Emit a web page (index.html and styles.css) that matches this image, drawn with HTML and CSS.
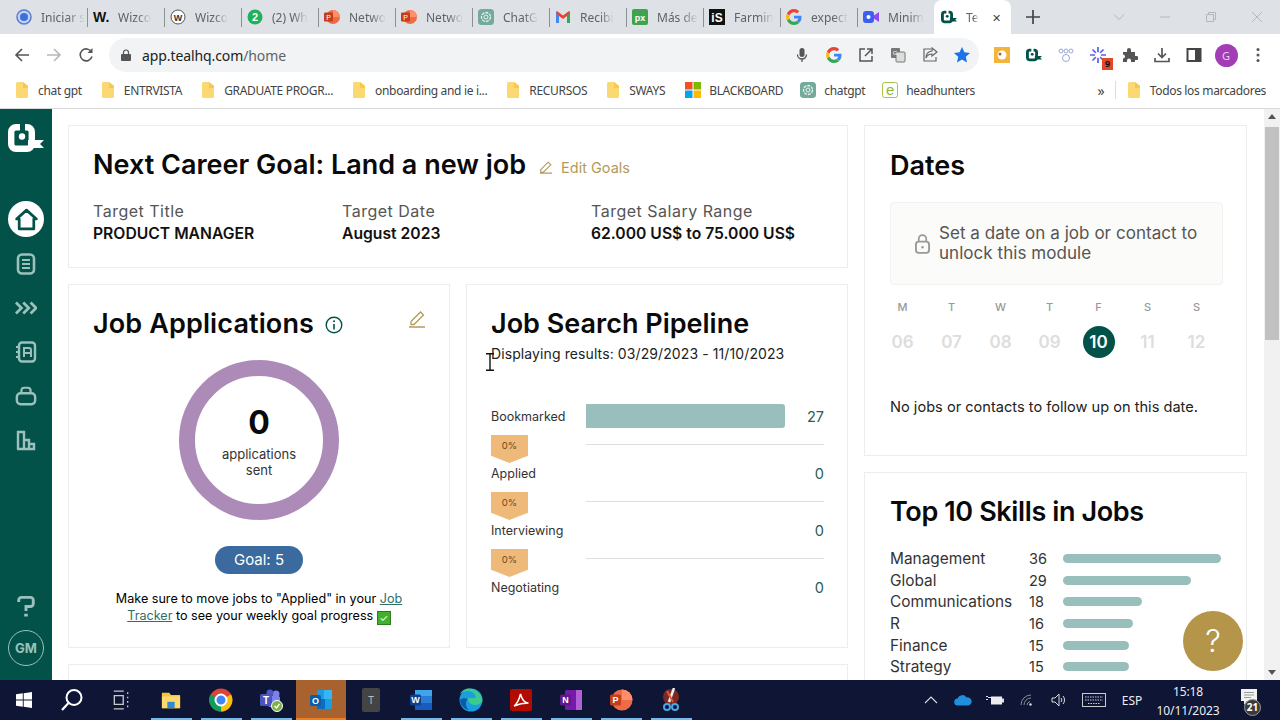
FILE: index.html
```html
<!DOCTYPE html>
<html lang="es">
<head>
<meta charset="utf-8">
<title>Teal</title>
<link rel="stylesheet" href="styles.css">
</head>
<body>
<svg class="defs" width="0" height="0">
  <symbol id="folder" viewBox="0 0 12 16"><path d="M0 1.500A1.500 1.500 0 0 1 1.500 0H7l5 4v10.500A1.500 1.500 0 0 1 10.500 16H1.500A1.500 1.500 0 0 1 0 14.500Z" fill="#fbd872"/><path d="M7 0l5 4v2H7Z" fill="#f5c84f"/></symbol>
  <symbol id="gpt" viewBox="0 0 16 16"><rect width="16" height="16" rx="3.500" fill="#74aa9c"/><circle cx="8" cy="8" r="4.500" fill="none" stroke="#e8f3f0" stroke-width="1.300" stroke-dasharray="3 1"/><circle cx="8" cy="8" r="2" fill="none" stroke="#e8f3f0"/></symbol>
  <symbol id="google" viewBox="0 0 16 16"><path d="M15.500 8.200c0-.6 0-1-.1-1.500H8v2.900h4.300c-.2 1-.8 1.800-1.600 2.300l2.500 1.900c1.500-1.300 2.300-3.300 2.300-5.600Z" fill="#4285f4"/><path d="M8 16c2.200 0 4-.7 5.200-2l-2.500-1.900c-.7.5-1.600.7-2.700.7-2.100 0-3.900-1.400-4.500-3.300L.9 11.400C2.200 14.100 4.900 16 8 16Z" fill="#34a853"/><path d="M3.500 9.500a5 5 0 0 1 0-3L.9 4.500a8 8 0 0 0 0 7Z" fill="#fbbc05"/><path d="M8 3.200c1.200 0 2.200.4 3 1.200l2.200-2.200A7.600 7.600 0 0 0 8 0C4.900 0 2.200 1.900.9 4.500l2.600 2C4.100 4.600 5.900 3.200 8 3.200Z" fill="#ea4335"/></symbol>
  <symbol id="tealmark" viewBox="0 0 36 28"><path d="M12 3.200H8a4.800 4.800 0 0 0-4.800 4.800v12A4.800 4.800 0 0 0 8 24.800h11a4.800 4.800 0 0 0 4.800-4.800V8A4.800 4.800 0 0 0 19 3.200h-2" fill="none" stroke="currentColor" stroke-width="6.400"/><circle cx="14" cy="12.500" r="3.200" fill="currentColor"/><path d="M20 16h16l-4 4 4 4H20Z" fill="currentColor"/></symbol>
</svg>

<div class="chrome">
  <div class="tabstrip">
    <div class="tab"><svg class="fav" viewBox="0 0 16 16"><circle cx="8" cy="8" r="7" fill="#c5d3f3" stroke="#5a7dd0" stroke-width="1.500"/><circle cx="8" cy="8" r="4" fill="#3f6fd8"/></svg><span class="tabtext">Iniciar s</span></div>
    <div class="tab"><svg class="fav" viewBox="0 0 16 16"><text x="0" y="13" class="svgt" font-size="14" font-weight="900" fill="#111">W.</text></svg><span class="tabtext">Wizco</span></div>
    <div class="tab"><svg class="fav" viewBox="0 0 16 16"><circle cx="8" cy="8" r="7" fill="#fff" stroke="#555"/><text x="8" y="11.500" class="svgt" font-size="9" font-weight="700" fill="#333" text-anchor="middle">W</text></svg><span class="tabtext">Wizco</span></div>
    <div class="tab"><svg class="fav" viewBox="0 0 16 16"><circle cx="8" cy="8" r="7.500" fill="#20b15a"/><text x="8" y="12" class="svgt" font-size="11" font-weight="700" fill="#fff" text-anchor="middle">2</text></svg><span class="tabtext">(2) Wh</span></div>
    <div class="tab"><svg class="fav" viewBox="0 0 16 16"><circle cx="9" cy="8" r="7" fill="#ed6c47"/><path d="M9 1a7 7 0 0 1 7 7H9Z" fill="#ff8f6b"/><rect x="0" y="3.500" width="9" height="9" rx="1" fill="#c43e1c"/><text x="4.500" y="10.800" class="svgt" font-size="7" fill="#fff" text-anchor="middle">P</text></svg><span class="tabtext">Netwo</span></div>
    <div class="tab"><svg class="fav" viewBox="0 0 16 16"><circle cx="9" cy="8" r="7" fill="#ed6c47"/><path d="M9 1a7 7 0 0 1 7 7H9Z" fill="#ff8f6b"/><rect x="0" y="3.500" width="9" height="9" rx="1" fill="#c43e1c"/><text x="4.500" y="10.800" class="svgt" font-size="7" fill="#fff" text-anchor="middle">P</text></svg><span class="tabtext">Netwo</span></div>
    <div class="tab"><svg class="fav"><use href="#gpt"/></svg><span class="tabtext">ChatG</span></div>
    <div class="tab"><svg class="fav" viewBox="0 0 16 16"><path d="M1 3v11h3V7l4 3 4-3v7h3V3l-1-1-6 4.500L2 2Z" fill="#ea4335"/><path d="M1 3v11h3V7Z" fill="#4285f4"/><path d="M12 7v7h3V3Z" fill="#34a853"/></svg><span class="tabtext">Recibi</span></div>
    <div class="tab"><svg class="fav" viewBox="0 0 16 16"><rect width="16" height="16" rx="2" fill="#3fa34d"/><text x="8" y="11.500" class="svgt" font-size="9" font-weight="700" fill="#fff" text-anchor="middle">px</text></svg><span class="tabtext">Más de</span></div>
    <div class="tab"><svg class="fav" viewBox="0 0 16 16"><rect width="16" height="16" fill="#111"/><text x="8" y="12.500" class="svgt" font-size="12" font-weight="700" fill="#fff" text-anchor="middle">iS</text></svg><span class="tabtext">Farmin</span></div>
    <div class="tab"><svg class="fav"><use href="#google"/></svg><span class="tabtext">expect</span></div>
    <div class="tab"><svg class="fav" viewBox="0 0 16 16"><rect y="2" width="11" height="12" rx="3" fill="#3d5ff0"/><path d="M11 6.500 16 3v10l-5-3.500Z" fill="#8a4bf0"/><circle cx="5.500" cy="8" r="2" fill="#fff"/></svg><span class="tabtext">Minim</span></div>
    <div class="tab tab-active"><svg class="fav logo-small"><use href="#tealmark"/></svg><span class="tabtext">Te</span><span class="tabclose">✕</span></div>
    <svg class="newtab" viewBox="0 0 14 14"><path d="M7 0v14M0 7h14" stroke="#444" stroke-width="1.700"/></svg>
    <div class="winctl">
      <svg class="wc" viewBox="0 0 12 12"><path d="M1 3.500l5 5 5-5" fill="none" stroke="#b5b7ba"/></svg>
      <svg class="wc" viewBox="0 0 12 12"><path d="M1 6h10" stroke="#b5b7ba"/></svg>
      <svg class="wc" viewBox="0 0 12 12"><path d="M1.500 3.500h7v7h-7ZM3.500 3.500v-2h7v7h-2" fill="none" stroke="#b5b7ba"/></svg>
      <svg class="wc" viewBox="0 0 12 12"><path d="M1 1l10 10M11 1 1 11" stroke="#b5b7ba"/></svg>
    </div>
  </div>

  <div class="toolbar">
    <div class="tbtn"><svg class="ti" viewBox="0 0 16 16"><path d="M15 8H2M8 2 2 8l6 6" fill="none" stroke="#555" stroke-width="1.600"/></svg></div>
    <div class="tbtn"><svg class="ti" viewBox="0 0 16 16"><path d="M1 8h13M8 2l6 6-6 6" fill="none" stroke="#b8b8b8" stroke-width="1.600"/></svg></div>
    <div class="tbtn"><svg class="ti" viewBox="0 0 16 16"><path d="M13.500 5A6 6 0 1 0 14 9.500" fill="none" stroke="#555" stroke-width="1.600"/><path d="M14.500 1v5h-5Z" fill="#555"/></svg></div>
    <div class="omnibox">
      <svg class="lock" viewBox="0 0 10 12"><path d="M2.500 5V3.500a2.500 2.500 0 0 1 5 0V5" fill="none" stroke="#555" stroke-width="1.200"/><rect y="5" width="10" height="7" rx="1" fill="#555"/></svg>
      <span class="url"><span class="url-host">app.tealhq.com</span>/home</span>
      <div class="omni-icons">
        <div class="tbtn"><svg class="ti" viewBox="0 0 16 16"><rect x="5.500" y="1" width="5" height="9" rx="2.500" fill="#555"/><path d="M3.500 7.500a4.500 4.500 0 0 0 9 0M8 12v3" fill="none" stroke="#555" stroke-width="1.300"/></svg></div>
        <div class="tbtn"><svg class="ti"><use href="#google"/></svg></div>
        <div class="tbtn"><svg class="ti" viewBox="0 0 16 16"><path d="M7 2H2v12h12V9M9 2h5v5M14 2 7 9" fill="none" stroke="#555" stroke-width="1.500"/></svg></div>
        <div class="tbtn"><svg class="ti" viewBox="0 0 16 16"><rect x="1" y="1" width="9" height="10" rx="1" fill="#777"/><rect x="6" y="5" width="9" height="10" rx="1" fill="#ddd" stroke="#777"/><text x="5" y="8" class="svgt" font-size="6" fill="#fff" text-anchor="middle">G</text></svg></div>
        <div class="tbtn"><svg class="ti" viewBox="0 0 16 16"><path d="M9 2h-7v12h12v-4M10 1l5 4-5 4V7C7 7 5 8.500 4 11c0-4 2-6.500 6-7Z" fill="none" stroke="#666" stroke-width="1.200"/></svg></div>
        <div class="tbtn"><svg class="ti" viewBox="0 0 16 16"><path d="M8 0l2.400 5.300 5.600.6-4.200 3.800 1.200 5.700L8 12.500l-5 2.900 1.200-5.700L0 5.900l5.600-.6Z" fill="#1a73e8"/></svg></div>
      </div>
    </div>
    <div class="extensions">
      <div class="tbtn"><svg class="ti" viewBox="0 0 16 16"><rect width="16" height="16" fill="#f3b43c"/><circle cx="8" cy="8" r="4.500" fill="#fff"/><circle cx="6" cy="7" r="1.500" fill="#a86a2c"/></svg></div>
      <div class="tbtn"><svg class="ti logo-small"><use href="#tealmark"/></svg></div>
      <div class="tbtn"><svg class="ti" viewBox="0 0 16 16"><g fill="none" stroke="#9aa5dc"><circle cx="3" cy="4" r="2"/><circle cx="8" cy="4" r="2"/><circle cx="13" cy="4" r="2"/><circle cx="8" cy="11" r="3.500"/></g></svg></div>
      <div class="tbtn ext-badge"><svg class="ti" viewBox="0 0 16 16"><g stroke="#5b5fe8" stroke-width="1.700"><path d="M8 0v16M0 8h16M2.500 2.500l11 11M13.500 2.500l-11 11"/></g><circle cx="8" cy="8" r="3" fill="#fff"/></svg><span class="badge9">9</span></div>
      <div class="tbtn"><svg class="ti" viewBox="0 0 16 16"><path d="M1 5h4V3a2 2 0 0 1 4 0v2h4v4h1.500a2 2 0 0 1 0 4H13v2H9v-1.500a2 2 0 0 0-4 0V15H1v-3.500a2 2 0 0 0 0-4Z" fill="#555"/></svg></div>
      <div class="tbtn"><svg class="ti" viewBox="0 0 16 16"><path d="M8 1v9M4 6.500 8 10.500l4-4M1 11v3.500h14V11" fill="none" stroke="#555" stroke-width="1.700"/></svg></div>
      <div class="tbtn"><svg class="ti" viewBox="0 0 16 16"><rect x="1.500" y="2" width="13" height="12" fill="none" stroke="#444" stroke-width="2"/><rect x="9" y="2" width="5" height="12" fill="#444"/></svg></div>
      <div class="tbtn"><span class="avatar">G</span></div>
      <div class="tbtn"><svg class="ti" viewBox="0 0 16 16"><g fill="#555"><circle cx="8" cy="2.500" r="1.500"/><circle cx="8" cy="8" r="1.500"/><circle cx="8" cy="13.500" r="1.500"/></g></svg></div>
    </div>
  </div>

  <div class="bookmarks">
    <a class="bm"><svg class="bmi"><use href="#folder"/></svg>chat gpt</a>
    <a class="bm"><svg class="bmi"><use href="#folder"/></svg>ENTRVISTA</a>
    <a class="bm"><svg class="bmi"><use href="#folder"/></svg>GRADUATE PROGR...</a>
    <a class="bm"><svg class="bmi"><use href="#folder"/></svg>onboarding and ie i...</a>
    <a class="bm"><svg class="bmi"><use href="#folder"/></svg>RECURSOS</a>
    <a class="bm"><svg class="bmi"><use href="#folder"/></svg>SWAYS</a>
    <a class="bm bm-app"><svg class="bmi bmi-wide" viewBox="0 0 16 16"><rect width="7.500" height="7.500" fill="#f25022"/><rect x="8.500" width="7.500" height="7.500" fill="#7fba00"/><rect y="8.500" width="7.500" height="7.500" fill="#00a4ef"/><rect x="8.500" y="8.500" width="7.500" height="7.500" fill="#ffb900"/></svg>BLACKBOARD</a>
    <a class="bm bm-app bm-tight"><svg class="bmi bmi-wide"><use href="#gpt"/></svg>chatgpt</a>
    <a class="bm bm-app bm-tight"><svg class="bmi bmi-wide" viewBox="0 0 16 16"><rect x=".5" y=".5" width="15" height="15" rx="2" fill="#fff" stroke="#a5c24a"/><text x="8" y="13" class="svgt" font-size="15" fill="#93b53a" text-anchor="middle">e</text></svg>headhunters</a>
    <div class="bm-end">
      <span class="bm-more">»</span>
      <span class="bm-sep"></span>
      <a class="bm"><svg class="bmi"><use href="#folder"/></svg>Todos los marcadores</a>
    </div>
  </div>
</div>

<div class="app">
  <nav class="sidebar">
    <svg class="logo"><use href="#tealmark"/></svg>
    <div class="nav-home"><svg viewBox="0 0 24 24"><path d="M12 3 2.500 11.500H5V21h14v-9.500h2.500Z" fill="none" stroke="#03524a" stroke-width="2.600" stroke-linejoin="round"/></svg></div>
    <svg class="nav-i" viewBox="0 0 22 22"><rect x="3" y="1.500" width="16" height="19" rx="4" fill="none" stroke="currentColor" stroke-width="2.600"/><path d="M7 7h8M7 11h8M7 15h8" stroke="currentColor" stroke-width="2"/></svg>
    <svg class="nav-i" viewBox="0 0 24 22"><path d="M1 5l6 6-6 6M9 5l6 6-6 6M17 5l6 6-6 6" fill="none" stroke="currentColor" stroke-width="3"/></svg>
    <svg class="nav-i" viewBox="0 0 22 22"><rect x="4" y="1.500" width="16" height="19" rx="3" fill="none" stroke="currentColor" stroke-width="2.400"/><path d="M1 6h4M1 11h4M1 16h4" stroke="currentColor" stroke-width="2"/><path d="M9 16V7h5a2 2 0 0 1 2 2v7M9 12h7" fill="none" stroke="currentColor" stroke-width="2"/></svg>
    <svg class="nav-i" viewBox="0 0 24 22"><path d="M7 7V5a3 3 0 0 1 3-3h4a3 3 0 0 1 3 3v2" fill="none" stroke="currentColor" stroke-width="2.400"/><rect x="2" y="8" width="20" height="12" rx="4" fill="none" stroke="currentColor" stroke-width="2.600"/></svg>
    <svg class="nav-i" viewBox="0 0 22 22"><path d="M3 20V3h6v17M9 20v-9h5v9M14 20v-5h5v5ZM2 20h18" fill="none" stroke="currentColor" stroke-width="2.400"/></svg>
    <div class="nav-spacer"></div>
    <svg class="nav-q" viewBox="0 0 22 26"><path d="M3 8V6a3 3 0 0 1 3-3h10a3 3 0 0 1 3 3v4a3 3 0 0 1-3 3h-5v5" fill="none" stroke="currentColor" stroke-width="3.200"/><path d="M9 21h4v3H9Z" fill="currentColor"/></svg>
    <div class="nav-user">GM</div>
  </nav>

  <main class="content">
    <div class="col-main">
      <section class="card goal-card">
        <div class="goal-head">
          <h1 class="h-title">Next Career Goal: Land a new job</h1>
          <svg class="pencil-s" viewBox="0 0 16 16"><path d="M2 11 10.500 2.500l3 3L5 14H2ZM1 15h14" fill="none" stroke="#b39a5c" stroke-width="1.300"/></svg>
          <span class="edit">Edit Goals</span>
        </div>
        <div class="goal-grid">
          <div><div class="g-label">Target Title</div><div class="g-value">PRODUCT MANAGER</div></div>
          <div><div class="g-label">Target Date</div><div class="g-value">August 2023</div></div>
          <div><div class="g-label">Target Salary Range</div><div class="g-value">62.000 US$ to 75.000 US$</div></div>
        </div>
      </section>

      <div class="row-two">
        <section class="card apps-card">
          <div class="apps-head">
            <h2 class="h-title apps-title">Job Applications</h2>
            <svg class="info" viewBox="0 0 18 18"><circle cx="9" cy="9" r="7.800" fill="none" stroke="#03524a" stroke-width="1.400"/><path d="M9 8v5.500" stroke="#03524a" stroke-width="1.600"/><circle cx="9" cy="5.300" r="1" fill="#03524a"/></svg>
            <svg class="pencil" viewBox="0 0 18 18"><path d="M3 11.500 12.500 2l3 3L6 14.500H3ZM1 17h16" fill="none" stroke="#b39a5c" stroke-width="1.300"/></svg>
          </div>
          <div class="donut">
            <div class="donut-num">0</div>
            <div class="donut-txt">applications<br>sent</div>
          </div>
          <div class="goal-pill">Goal: 5</div>
          <p class="apps-note">Make sure to move jobs to "Applied" in your <a class="link">Job Tracker</a> to see your weekly goal progress <span class="check">✓</span></p>
        </section>

        <section class="card pipe-card">
          <h2 class="h-title">Job Search Pipeline</h2>
          <p class="pipe-range">Displaying results: 03/29/2023 - 11/10/2023</p>
          <div class="pipe">
            <div class="pipe-row"><span class="pipe-label">Bookmarked</span><div class="pipe-track"><div class="pipe-bar"></div></div><span class="pipe-val">27</span></div>
            <div class="pipe-link"><span class="pct">0%</span><span class="pipe-line"></span></div>
            <div class="pipe-row"><span class="pipe-label">Applied</span><div class="pipe-track"></div><span class="pipe-val">0</span></div>
            <div class="pipe-link"><span class="pct">0%</span><span class="pipe-line"></span></div>
            <div class="pipe-row"><span class="pipe-label">Interviewing</span><div class="pipe-track"></div><span class="pipe-val">0</span></div>
            <div class="pipe-link"><span class="pct">0%</span><span class="pipe-line"></span></div>
            <div class="pipe-row"><span class="pipe-label">Negotiating</span><div class="pipe-track"></div><span class="pipe-val">0</span></div>
          </div>
        </section>
      </div>
      <section class="card stub-card"></section>
    </div>

    <div class="col-side">
      <section class="card dates-card">
        <h2 class="h-title">Dates</h2>
        <div class="lockbox">
          <svg class="lockbox-i" viewBox="0 0 16 22"><path d="M4 9V6a4 4 0 0 1 8 0v3" fill="none" stroke="#999" stroke-width="1.800"/><rect x="1" y="9" width="14" height="12" rx="3" fill="none" stroke="#999" stroke-width="2"/><circle cx="8" cy="15" r="1.300" fill="#999"/></svg>
          <span class="lockbox-t">Set a date on a job or contact to unlock this module</span>
        </div>
        <div class="cal">
          <span class="cal-d">M</span><span class="cal-d">T</span><span class="cal-d">W</span><span class="cal-d">T</span><span class="cal-d">F</span><span class="cal-d">S</span><span class="cal-d">S</span>
          <span class="cal-n">06</span><span class="cal-n">07</span><span class="cal-n">08</span><span class="cal-n">09</span><span class="cal-n cal-today">10</span><span class="cal-n">11</span><span class="cal-n">12</span>
        </div>
        <p class="dates-empty">No jobs or contacts to follow up on this date.</p>
      </section>

      <section class="card skills-card">
        <h2 class="h-title">Top 10 Skills in Jobs</h2>
        <div class="skills">
          <span>Management</span><span class="sk-n">36</span><span class="sk-bar" style="width:158px"></span>
          <span>Global</span><span class="sk-n">29</span><span class="sk-bar" style="width:128px"></span>
          <span>Communications</span><span class="sk-n">18</span><span class="sk-bar" style="width:79px"></span>
          <span>R</span><span class="sk-n">16</span><span class="sk-bar" style="width:70px"></span>
          <span>Finance</span><span class="sk-n">15</span><span class="sk-bar" style="width:66px"></span>
          <span>Strategy</span><span class="sk-n">15</span><span class="sk-bar" style="width:66px"></span>
        </div>
      </section>
    </div>

    <div class="help">?</div>
    <svg class="ibeam" viewBox="0 0 10 18"><path d="M1 .7h8M5 .7v16.600M1 17.300h8" fill="none" stroke="#111" stroke-width="1.400"/></svg>
  </main>

  <div class="scrollbar">
    <svg class="sb-arrow" viewBox="0 0 8 5"><path d="M4 0 8 5H0Z" fill="#555"/></svg>
    <div class="sb-thumb"></div>
    <svg class="sb-arrow sb-arrow-end" viewBox="0 0 8 5"><path d="M4 5 0 0h8Z" fill="#555"/></svg>
  </div>
</div>

<footer class="taskbar">
  <div class="tb-item tb-narrow"><svg class="tb-i tb-win" viewBox="0 0 16 16"><path d="M0 2.300 6.800 1.300v6.200H0ZM7.700 1.200 16 0v7.500H7.700ZM0 8.500h6.800v6.200L0 13.700ZM7.700 8.500H16V16l-8.300-1.200Z" fill="#fff"/></svg></div>
  <div class="tb-item tb-narrow"><svg class="tb-i tb-search" viewBox="0 0 24 24"><circle cx="14" cy="9.500" r="7.500" fill="none" stroke="#fff" stroke-width="2"/><path d="M8.500 15 2 22" stroke="#fff" stroke-width="2.200"/></svg></div>
  <div class="tb-item"><svg class="tb-i" viewBox="0 0 18 18"><path d="M2.500 1h9M2.500 17h9M3 5h8v8H3ZM15 2v1.500M15 6v1.500M15 10v1.500M15 14v1.500" fill="none" stroke="#c8c8c8" stroke-width="1.200"/></svg></div>
  <div class="tb-item run"><svg class="tb-i" viewBox="0 0 22 22"><path d="M1 3h8l2 2.500h10V20H1Z" fill="#f5c542"/><path d="M1 7h20v13H1Z" fill="#ffd96a"/><rect x="7" y="13" width="8" height="7" fill="#2f88d8"/></svg></div>
  <div class="tb-item run"><svg class="tb-i tb-big" viewBox="0 0 24 24"><circle cx="12" cy="12" r="11.500" fill="#db4437"/><path d="M12 12 22 6.500A11.500 11.500 0 0 1 12 23.500Z" fill="#f4c20d"/><path d="M12 12 12 23.500A11.500 11.500 0 0 1 1.500 6.500Z" fill="#0f9d58"/><circle cx="12" cy="12" r="5.500" fill="#4285f4" stroke="#fff" stroke-width="2"/></svg></div>
  <div class="tb-item run"><svg class="tb-i tb-big" viewBox="0 0 24 24"><circle cx="17" cy="6" r="3.500" fill="#7b83eb"/><circle cx="11" cy="5" r="3.500" fill="#5059c9"/><rect x="9" y="8" width="12" height="11" rx="2" fill="#7b83eb"/><rect x="1" y="6" width="12" height="12" rx="1.500" fill="#4b53bc"/><text x="7" y="15.500" class="svgt" font-size="10" font-weight="700" fill="#fff" text-anchor="middle">T</text><circle cx="18" cy="18" r="5.500" fill="#7cb342" stroke="#fff"/><path d="M15.500 18l2 2 3-4" fill="none" stroke="#fff" stroke-width="1.300"/></svg></div>
  <div class="tb-item tb-active"><svg class="tb-i tb-big" viewBox="0 0 24 24"><rect x="8" y="2" width="15" height="19" rx="1.500" fill="#1c9ce5"/><rect x="15" y="2" width="8" height="9" fill="#35b8f1"/><rect x="8" y="11" width="8" height="10" fill="#0f6cbd"/><rect x="1" y="7" width="11" height="11" rx="1.500" fill="#0a5ea8"/><text x="6.500" y="15.500" class="svgt" font-size="9" font-weight="700" fill="#fff" text-anchor="middle">O</text></svg></div>
  <div class="tb-item"><span class="tb-t">T</span></div>
  <div class="tb-item run"><svg class="tb-i tb-big" viewBox="0 0 24 24"><rect x="6" y="2" width="17" height="20" rx="1.500" fill="#2b7cd3"/><rect x="6" y="2" width="17" height="6" fill="#41a5ee"/><rect x="6" y="15" width="17" height="7" fill="#185abd"/><rect x="1" y="6.500" width="11" height="11" rx="1.500" fill="#103f91"/><text x="6.500" y="15" class="svgt" font-size="9" font-weight="700" fill="#fff" text-anchor="middle">W</text></svg></div>
  <div class="tb-item run"><svg class="tb-i tb-big" viewBox="0 0 24 24"><circle cx="12" cy="12" r="11.500" fill="#1b9de2"/><path d="M23.500 13C23 5 16 .5 10 .5 7 .5 3 2 1 6c3-3 8-4 12-2 3 1.500 4 4 3.500 6H9c-.5 4 3 7 7 7 3 0 5-1 7.500-4Z" fill="#3ccb8d"/><path d="M9 11c-3 2-3 8 1 11-5-1-9-5-9-10 2-2 5-2.500 8-1Z" fill="#0c59a4"/></svg></div>
  <div class="tb-item run"><svg class="tb-i tb-big" viewBox="0 0 24 24"><rect x="1" y="1" width="22" height="22" rx="2" fill="#b30b00"/><path d="M5 18c3-2 5-6 6.500-12 1.500 6 4 9 8 9-5 0-10 1-14.500 3Z" fill="none" stroke="#fff" stroke-width="1.500"/></svg></div>
  <div class="tb-item run"><svg class="tb-i tb-big" viewBox="0 0 24 24"><rect x="6" y="2" width="17" height="20" rx="1.500" fill="#7719aa"/><rect x="17" y="2" width="6" height="20" fill="#b35fd6"/><rect x="1" y="6.500" width="11" height="11" rx="1.500" fill="#5c1a8a"/><text x="6.500" y="15" class="svgt" font-size="9" font-weight="700" fill="#fff" text-anchor="middle">N</text></svg></div>
  <div class="tb-item run"><svg class="tb-i tb-big" viewBox="0 0 24 24"><circle cx="13" cy="12" r="10.500" fill="#ed6c47"/><path d="M13 1.500A10.500 10.500 0 0 1 23.500 12H13Z" fill="#ff8f6b"/><rect x="1" y="6.500" width="11" height="11" rx="1.500" fill="#c43e1c"/><text x="6.500" y="15" class="svgt" font-size="9" font-weight="700" fill="#fff" text-anchor="middle">P</text></svg></div>
  <div class="tb-item run"><svg class="tb-i tb-big" viewBox="0 0 24 24"><circle cx="12" cy="9" r="8" fill="#7a2a20"/><path d="M15 0 10 14" stroke="#f0f0f0" stroke-width="2.500"/><path d="M8 3l6 11" stroke="#e2553a" stroke-width="2"/><circle cx="8" cy="19" r="3" fill="none" stroke="#47a7e8" stroke-width="2"/><circle cx="16" cy="19" r="3" fill="none" stroke="#47a7e8" stroke-width="2"/></svg></div>

  <div class="tray">
    <div class="tr"><svg class="tr-i" viewBox="0 0 14 8"><path d="M1 7l6-6 6 6" fill="none" stroke="#ddd" stroke-width="1.100"/></svg></div>
    <div class="tr"><svg class="tr-i tr-cloud" viewBox="0 0 18 11"><path d="M4 11a3.500 3.500 0 0 1-.5-7A5 5 0 0 1 12.500 3 4 4 0 0 1 14.500 11Z" fill="#1f8fe0"/></svg></div>
    <div class="tr"><svg class="tr-i tr-cloud" viewBox="0 0 18 11"><path d="M0 2h2M0 5h2M2 3h3" stroke="#ddd"/><rect x="5" y="2" width="11" height="8" fill="#ededed"/><rect x="16" y="4" width="2" height="4" fill="#ddd"/></svg></div>
    <div class="tr"><svg class="tr-i tr-cloud" viewBox="0 0 14 12"><path d="M1 11A10 10 0 0 1 11 1M4 11A7 7 0 0 1 11 4M7 11a4 4 0 0 1 3-3.500" fill="none" stroke="#8a8d99"/><circle cx="10.500" cy="10.500" r="1.200" fill="#ddd"/></svg></div>
    <div class="tr"><svg class="tr-i tr-vol" viewBox="0 0 16 14"><path d="M1 5h3l4-4v12L4 9H1Z" fill="none" stroke="#ddd"/><path d="M10 5a3 3 0 0 1 0 4M12 3a6 6 0 0 1 0 8" fill="none" stroke="#ddd"/></svg></div>
    <div class="tr tr-kb"><svg class="tr-i tr-kbi" viewBox="0 0 24 14"><rect x=".5" y=".5" width="23" height="13" fill="none" stroke="#ccc"/><path d="M3 4h18M3 7h18M6 10.500h12" stroke="#ccc" stroke-dasharray="1.500 1"/></svg></div>
    <div class="tr tr-lang">ESP</div>
    <div class="tr tr-clock"><span>15:18</span><span>10/11/2023</span></div>
    <div class="tr tr-notif"><svg class="tr-i tr-msg" viewBox="0 0 18 18"><path d="M1 1h16v12H7l-3 4v-4H1Z" fill="#f2f2f2"/><path d="M4 4.500h10M4 7h10M4 9.500h7" stroke="#999"/></svg><span class="notif-badge">21</span></div>
  </div>
</footer>
</body>
</html>
```
FILE: styles.css
```css
* { box-sizing: border-box; }
html, body { margin: 0; height: 720px; overflow: hidden; }
body { display: flex; flex-direction: column; font-family: Inter, "Liberation Sans", sans-serif; color: #111; background: #fff; }
.defs { position: absolute; }
.svgt { font-family: "Liberation Sans", sans-serif; }
h1, h2, p { margin: 0; }

/* Browser chrome */
.chrome { flex: none; font-family: "Noto Sans", sans-serif; }
.tabstrip { height: 34px; background: #dee1e6; display: flex; align-items: center; padding-left: 10px; }
.tab { width: 77px; height: 34px; display: flex; align-items: center; padding-left: 6px; position: relative; font-size: 12px; color: #5f6368; }
.tab + .tab::before { content: ""; position: absolute; left: 0; top: 8px; height: 19px; width: 1px; background: #8c8f93; }
.fav { width: 16px; height: 16px; flex: none; }
.tabtext { margin-left: 9px; white-space: nowrap; -webkit-mask-image: linear-gradient(90deg, #000 60%, transparent); mask-image: linear-gradient(90deg, #000 60%, transparent); }
.tab-active { background: #fff; border-radius: 8px 8px 0 0; padding-left: 7px; }
.tab-active::before { display: none; }
.tab-active .tabtext { margin-left: 9px; }
.tabclose { margin-left: 13px; font-size: 11px; color: #444; }
.logo-small { color: #03524a; }
.newtab { width: 14px; height: 14px; margin-left: 15px; flex: none; }
.winctl { margin-left: auto; display: flex; gap: 34px; padding-right: 17px; }
.wc { width: 12px; height: 12px; }

.toolbar { height: 42px; background: #fff; display: flex; align-items: center; padding-left: 6px; }
.tbtn { width: 32px; height: 32px; display: flex; align-items: center; justify-content: center; flex: none; position: relative; }
.ti { width: 16px; height: 16px; }
.omnibox { width: 870px; height: 34px; margin-left: 7px; border-radius: 17px; background: #f1f3f4; display: flex; align-items: center; padding-left: 12px; padding-right: 1px; }
.lock { width: 10px; height: 12px; flex: none; }
.url { margin-left: 11px; font-size: 14px; color: #5f6368; letter-spacing: -.1px; }
.url-host { color: #222; }
.omni-icons { margin-left: auto; display: flex; }
.extensions { display: flex; margin-left: 7px; }
.badge9 { position: absolute; right: 1px; bottom: 1px; width: 11px; height: 12px; background: #e0492b; color: #111; font-size: 9px; font-weight: 700; line-height: 12px; text-align: center; }
.avatar { width: 23px; height: 23px; border-radius: 50%; background: #a43db5; color: #e9d3ee; font-size: 11px; line-height: 23px; text-align: center; }

.bookmarks { height: 33px; background: #fff; border-bottom: 1px solid #d8d9da; padding: 0 14px 4px 16px; display: flex; align-items: center; gap: 20px; font-size: 12px; color: #444; white-space: nowrap; }
.bm { display: flex; align-items: center; gap: 10px; letter-spacing: -.33px; }
.bm-app { gap: 8px; }
.bm-tight { margin-left: -3px; }
.bmi { width: 12px; height: 16px; flex: none; }
.bmi-wide { width: 16px; }
.bm-end { margin-left: auto; display: flex; align-items: center; }
.bm-more { font-size: 14px; }
.bm-sep { width: 1px; height: 18px; background: #ddd; margin: 0 12px 0 10px; }

/* App */
.app { flex: 1; min-height: 0; display: flex; }
.sidebar { width: 52px; flex: none; background: #03524a; color: #9cc0bb; display: flex; flex-direction: column; align-items: center; padding-top: 15px; }
.logo { width: 36px; height: 28px; color: #fff; }
.nav-home { width: 36px; height: 36px; border-radius: 50%; background: #fff; margin-top: 49px; margin-bottom: 16px; display: flex; align-items: center; justify-content: center; }
.nav-home svg { width: 25px; height: 25px; }
.nav-i { width: 22px; height: 22px; margin-bottom: 22px; flex: none; }
.nav-spacer { flex: 1; }
.nav-q { width: 20px; height: 25px; margin-bottom: 11px; }
.nav-user { width: 36px; height: 36px; border-radius: 50%; border: 1px solid #9cc0bb; font-size: 13px; font-weight: 700; line-height: 34px; text-align: center; margin-bottom: 14px; }

.content { flex: 1; min-width: 0; position: relative; overflow: hidden; display: flex; gap: 16px; padding: 16px 0 0 16px; align-items: flex-start; }
.col-main { width: 780px; display: flex; flex-direction: column; gap: 16px; flex: none; }
.col-side { width: 383px; display: flex; flex-direction: column; gap: 16px; flex: none; }
.card { border: 1px solid #ededed; background: #fff; padding: 0 24px; }
.h-title { font-size: 27px; font-weight: 600; line-height: 36px; color: #0a0a0a; }

.goal-card { height: 143px; padding-top: 21px; }
.goal-head { display: flex; align-items: center; }
.pencil-s { width: 14px; height: 14px; margin-left: 13px; margin-top: 4px; }
.edit { font-size: 14.500px; color: #b39a5c; margin-left: 8px; margin-top: 4px; }
.goal-grid { display: grid; grid-template-columns: repeat(3, 249px); margin-top: 17px; }
.g-label { font-size: 16px; line-height: 22px; color: #555; letter-spacing: .5px; }
.g-value { font-size: 15.700px; line-height: 23px; font-weight: 600; }

.row-two { display: flex; gap: 16px; }
.apps-card { width: 382px; height: 364px; padding-top: 21px; }
.apps-head { display: flex; align-items: center; }
.apps-title { letter-spacing: .12px; }
.info { width: 18px; height: 18px; margin-left: 11px; margin-top: 2px; }
.pencil { width: 18px; height: 18px; margin-left: auto; margin-right: -1px; margin-top: -10px; }
.donut { width: 160px; height: 160px; border: 16px solid #ad8bb8; border-radius: 50%; margin: 18px auto 0; display: flex; flex-direction: column; align-items: center; text-align: center; padding-top: 28px; }
.donut-num { font-size: 32px; font-weight: 700; line-height: 38px; color: #0a0a0a; }
.donut-txt { font-size: 13px; line-height: 16px; color: #333; margin-top: 4px; }
.goal-pill { width: 88px; height: 28px; border-radius: 14px; background: #3a6a9e; color: #fff; font-size: 15px; line-height: 28px; text-align: center; margin: 26px auto 0; }
.apps-note { font-size: 12.600px; font-weight: 400; line-height: 17px; text-align: center; margin: 16px auto 0; width: 300px; color: #000; }
.link { color: #2f6e66; text-decoration: underline; }
.check { display: inline-block; width: 14px; height: 14px; background: #43b02a; border: 1px solid #2d7a22; color: #fff; font-size: 10px; line-height: 12px; text-align: center; vertical-align: -2px; }

.pipe-card { width: 382px; height: 364px; padding-top: 21px; padding-right: 23px; }
.pipe-range { font-size: 14px; line-height: 20px; margin-top: 2px; color: #222; letter-spacing: .1px; }
.pipe { margin-top: 40px; }
.pipe-row { display: flex; align-items: center; height: 24px; font-size: 12.500px; color: #333; }
.pipe-label { width: 95px; flex: none; }
.pipe-track { width: 199px; height: 24px; flex: none; }
.pipe-bar { width: 199px; height: 24px; background: #98bfbc; border-radius: 0 3px 3px 0; }
.pipe-val { margin-left: auto; font-size: 14.500px; color: #2a5d55; }
.pipe-link { height: 33px; display: flex; }
.pct { width: 37px; height: 28px; margin-top: 7px; background: #efb97a; color: #6a4a20; font-size: 9.500px; line-height: 22px; text-align: center; clip-path: polygon(0 0, 100% 0, 100% 74%, 50% 100%, 0 74%); flex: none; position: relative; z-index: 1; }
.pipe-line { flex: 1; height: 1px; margin: 16px 0 0 58px; background: #dedede; }
.stub-card { height: 60px; }

.dates-card { height: 331px; padding: 22px 24px 0 25px; }
.lockbox { width: 333px; height: 83px; margin-top: 18px; background: #fbfbf9; border: 1px solid #f2f2f0; border-radius: 4px; display: flex; align-items: center; padding: 0 0 2px 24px; gap: 9px; font-size: 17px; line-height: 20px; color: #555; }
.lockbox-i { width: 15px; height: 21px; flex: none; margin-top: 2px; }
.lockbox-t { letter-spacing: .05px; }
.cal { display: grid; grid-template-columns: repeat(7, 49px); margin: 14px 0 0 -12px; justify-items: center; align-items: center; grid-template-rows: 16px 34px; row-gap: 10px; }
.cal-d { font-size: 11px; font-weight: 500; color: #999; }
.cal-n { font-size: 17px; font-weight: 600; color: #ddd; width: 32px; height: 32px; line-height: 32px; text-align: center; }
.cal-today { background: #03524a; color: #fff; border-radius: 50%; }
.dates-empty { font-size: 14.600px; line-height: 20px; margin-top: 38px; color: #222; }

.skills-card { height: 300px; padding: 21px 24px 0 25px; }
.skills-card .h-title { letter-spacing: -.38px; }
.skills { display: grid; grid-template-columns: 139px 34px 158px; grid-auto-rows: 21.600px; align-items: center; margin-top: 18px; font-size: 15.400px; color: #333; }
.sk-n { color: #333; font-size: 14.500px; }
.sk-bar { height: 9px; border-radius: 5px; background: #98bfbc; }

.help { position: absolute; left: 1131px; top: 502px; width: 60px; height: 60px; border-radius: 50%; background: #b5954a; color: #fff; font-size: 31px; font-weight: 300; line-height: 60px; text-align: center; }
.ibeam { position: absolute; left: 433px; top: 244px; width: 10px; height: 18px; }

.scrollbar { width: 16px; flex: none; background: #f1f1f1; display: flex; flex-direction: column; align-items: center; padding: 5px 0; }
.sb-arrow { width: 8px; height: 5px; flex: none; }
.sb-thumb { width: 14px; height: 213px; margin-top: 8px; background: #c1c1c1; flex: none; }
.sb-arrow-end { margin-top: auto; }

/* Taskbar */
.taskbar { height: 40px; flex: none; background: #0f1535; display: flex; align-items: stretch; font-family: "Noto Sans", sans-serif; }
.tb-item { width: 50px; flex: none; display: flex; align-items: center; justify-content: center; position: relative; }
.tb-narrow { width: 48px; }
.tb-i { width: 20px; height: 20px; }
.tb-win { width: 16px; height: 16px; }
.tb-search { width: 24px; height: 24px; }
.tb-big { width: 24px; height: 24px; }
.run::after { content: ""; position: absolute; left: 5px; right: 4px; bottom: 0; height: 2px; background: #76b9ed; }
.tb-active { background: #a8622f; }
.tb-active::after { content: ""; position: absolute; left: 0; right: 0; bottom: 0; height: 2px; background: #f07c1a; }
.tb-t { width: 18px; height: 24px; background: #444; color: #bbb; font-size: 10px; line-height: 24px; text-align: center; border-radius: 2px; }
.tray { margin-left: auto; display: flex; align-items: stretch; padding-right: 8px; color: #eee; }
.tr { width: 32px; display: flex; align-items: center; justify-content: center; flex: none; }
.tr-i { width: 14px; height: 8px; }
.tr-cloud { width: 18px; height: 12px; }
.tr-vol { width: 16px; height: 14px; }
.tr-kb { width: 38px; }
.tr-kbi { width: 24px; height: 14px; }
.tr-lang { width: 38px; font-size: 12px; }
.tr-clock { width: 74px; flex-direction: column; font-size: 12px; line-height: 19px; padding-top: 2px; letter-spacing: -.1px; }
.tr-notif { width: 47px; position: relative; }
.tr-msg { width: 18px; height: 18px; margin-top: -6px; }
.notif-badge { position: absolute; left: 19px; top: 19px; width: 17px; height: 17px; border-radius: 50%; background: #3a3a3a; border: 1px solid #999; color: #fff; font-size: 10px; font-weight: 700; line-height: 15px; text-align: center; }
```
